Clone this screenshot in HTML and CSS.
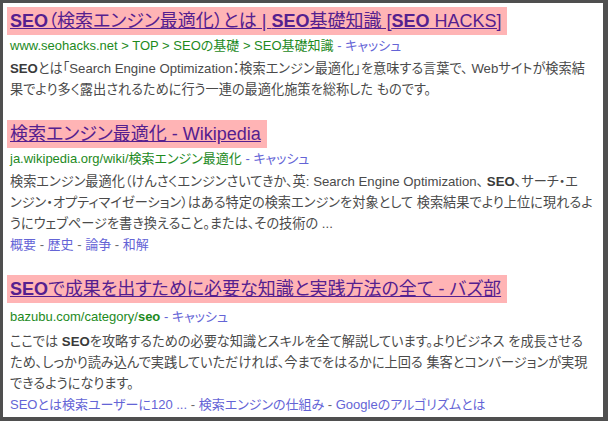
FILE: index.html
```html
<!DOCTYPE html>
<html lang="ja">
<head>
  <meta charset="UTF-8">
  <meta name="viewport" content="width=device-width, initial-scale=1.0">
  <title>SEO 検索結果</title>
  <link rel="stylesheet" href="styles.css">
</head>
<body>
  <div class="frame">
    <div class="result">
      <a class="title" href="#"><b>SEO</b>（検索エンジン最適化）とは | <b>SEO</b>基礎知識 [<b>SEO</b> HACKS]</a>
      <div class="url">www.seohacks.net &gt; TOP &gt; SEOの基礎 &gt; SEO基礎知識 <a class="cache" href="#">- キャッシュ</a></div>
      <p class="snippet"><b>SEO</b>とは「Search Engine Optimization：検索エンジン最適化」を意味する言葉で、 Webサイトが検索結<br>果でより多く露出されるために行う一連の最適化施策を総称した ものです。</p>
    </div>

    <div class="result">
      <a class="title" href="#">検索エンジン最適化 - Wikipedia</a>
      <div class="url">ja.wikipedia.org/wiki/検索エンジン最適化 <a class="cache" href="#">- キャッシュ</a></div>
      <p class="snippet">検索エンジン最適化（けんさくエンジンさいてきか、英: Search Engine Optimization、 <b>SEO</b>、サーチ・エ<br>ンジン・オプティマイゼーション）はある特定の検索エンジンを対象として 検索結果でより上位に現れるよ<br>うにウェブページを書き換えること。または、その技術の ...</p>
      <div class="sitelinks"><a href="#">概要</a> - <a href="#">歴史</a> - <a href="#">論争</a> - <a href="#">和解</a></div>
    </div>

    <div class="result result-last">
      <a class="title" href="#"><b>SEO</b>で成果を出すために必要な知識と実践方法の全て - バズ部</a>
      <div class="url">bazubu.com/category/<b>seo</b> <a class="cache" href="#">- キャッシュ</a></div>
      <p class="snippet">ここでは <b>SEO</b>を攻略するための必要な知識とスキルを全て解説しています。よりビジネス を成長させる<br>ため、しっかり読み込んで実践していただければ、今までをはるかに上回る 集客とコンバージョンが実現<br>できるようになります。</p>
      <div class="sitelinks"><a href="#">SEOとは検索ユーザーに120 ...</a> - <a href="#">検索エンジンの仕組み</a> - <a href="#">Googleのアルゴリズムとは</a></div>
    </div>
  </div>
</body>
</html>
```

FILE: styles.css
```css
html, body {
  margin: 0;
  height: 100%;
}
body {
  font-family: "Liberation Sans", Arial, "Noto Sans CJK JP", sans-serif;
  font-feature-settings: "palt";
  background: #fff;
}
.frame {
  box-sizing: border-box;
  height: 421px;
  border-style: solid;
  border-color: #4f4f4f;
  border-width: 3px 5px 4px 3px;
  padding: 4px 0 0 4px;
  overflow: hidden;
}
.result { margin-bottom: 20px; }
.title {
  display: inline-block;
  background: #ffb4b5;
  color: #55208f;
  font-size: 18px;
  line-height: 28px;
  padding: 0 6px 0 3px;
  text-decoration: underline;
}
.url {
  color: #1d8a1d;
  font-size: 13px;
  line-height: 21px;
  padding-left: 3px;
}
.result-last .url { margin-top: 3px; }
.result-last .snippet { margin-top: 4px; }
.cache, .sitelinks a {
  color: #6464d6;
  text-decoration: none;
}
.snippet {
  margin: 2px 0 0;
  padding-left: 3px;
  color: #4a4a4a;
  font-size: 13.2px;
  line-height: 21px;
  white-space: nowrap;
}
.snippet b { color: #3a3a3a; }
.sitelinks {
  padding-left: 3px;
  color: #6a6a6a;
  font-size: 13px;
  line-height: 21px;
}
```
